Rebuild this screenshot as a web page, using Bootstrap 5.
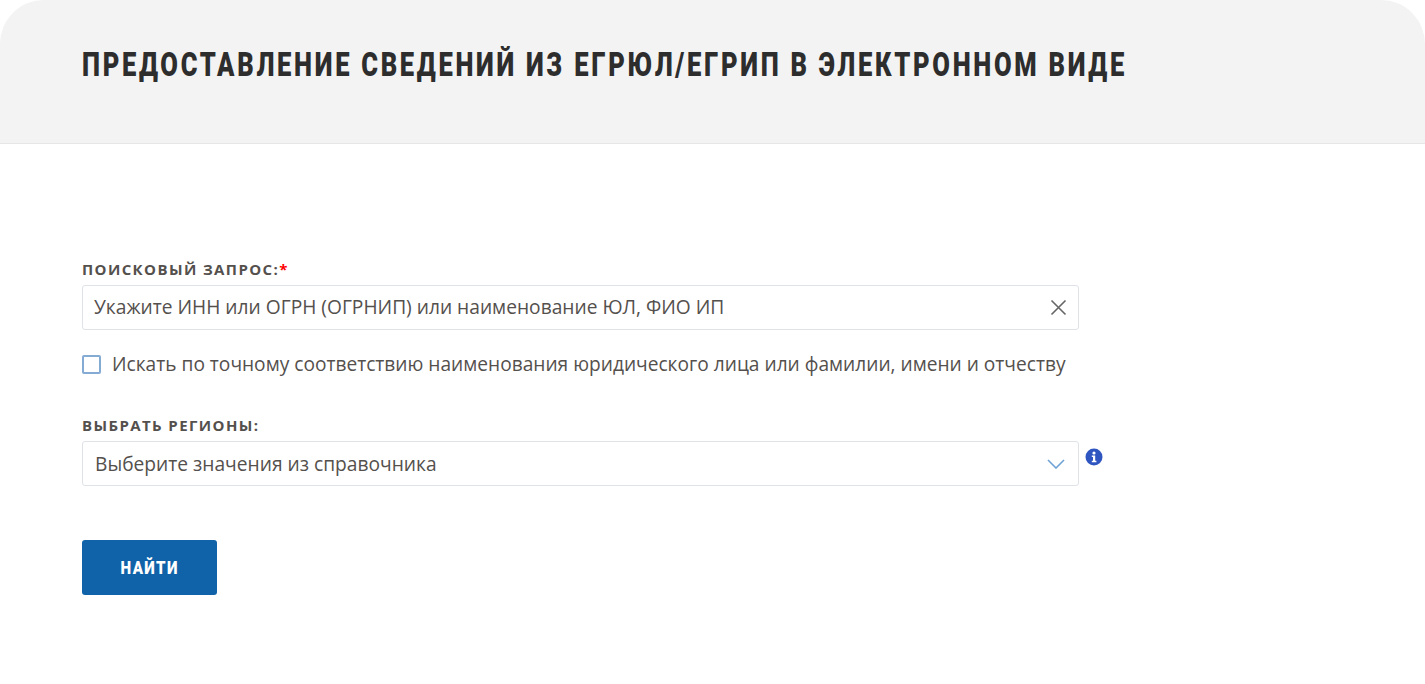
<!DOCTYPE html>
<html lang="ru">
<head>
    <meta charset="UTF-8">
    <meta name="viewport" content="width=device-width, initial-scale=1.0">
    <title>ЕГРЮЛ</title>
    <link rel="stylesheet" href="https://cdn.jsdelivr.net/npm/bootstrap@5.3.2/dist/css/bootstrap.min.css">
    <style>
        html, body { height: 100%; }
        body { background: #fff; font-family: "Open Sans", sans-serif; color: #54504d; overflow: hidden; }
        .shapka { height: 144px; background: #f3f3f3; border-bottom: 1px solid #e6e6e6; border-radius: 44px 44px 0 0; padding: 44px 82px 0; }
        .shapka h1 { font-family: "Roboto", sans-serif; font-weight: 900; font-size: 34px; line-height: 40px; letter-spacing: 3.6px; color: #2d2d2d; margin: 0; white-space: nowrap; transform: scaleX(.751); transform-origin: left center; }
        .forma { padding: 115px 0 0 82px; }
        .metka { font-size: 15px; font-weight: 700; letter-spacing: 1.4px; line-height: 20px; color: #54504d; margin-bottom: 6px; }
        .metka span { color: #f00; }
        .pole { width: 997px; height: 45px; border: 1px solid #dfe3e8; border-radius: 3px; font-size: 19.2px; color: #54504d; background: #fff; }
        .pole-poisk { padding: 0 11px; }
        .pole-region { padding: 1px 13px 0 12px; }
        .galka-ryad { margin-top: 22px; height: 24px; gap: 11px; font-size: 19.15px; line-height: 24px; }
        .galka { width: 19px; height: 19px; border: 2px solid #84abd4; border-radius: 2px; background: #fff; }
        .blok-region { margin-top: 39px; }
        .info { margin: 7px 0 0 6px; }
        .knopka { width: 135px; height: 55px; margin-top: 54px; background: #1063a8; border: 0; border-radius: 3px; color: #fff; padding: 0; }
        .knopka span { display: inline-block; font-family: "Roboto", sans-serif; font-weight: 900; font-size: 18px; letter-spacing: 1.6px; transform: scaleX(.84); }
    </style>
</head>
<body>
    <header class="shapka">
        <h1>ПРЕДОСТАВЛЕНИЕ СВЕДЕНИЙ ИЗ ЕГРЮЛ/ЕГРИП В ЭЛЕКТРОННОМ ВИДЕ</h1>
    </header>

    <main class="forma">
        <div class="metka">ПОИСКОВЫЙ ЗАПРОС:<span>*</span></div>
        <div class="pole pole-poisk d-flex align-items-center justify-content-between">
            <span>Укажите ИНН или ОГРН (ОГРНИП) или наименование ЮЛ, ФИО ИП</span>
            <svg width="17" height="17" viewBox="0 0 17 17"><path d="M1.5 1.5l14 14M15.5 1.5l-14 14" stroke="#666" stroke-width="1.6" fill="none"/></svg>
        </div>

        <div class="galka-ryad d-flex align-items-center">
            <span class="galka d-block"></span>
            <span>Искать по точному соответствию наименования юридического лица или фамилии, имени и отчеству</span>
        </div>

        <div class="blok-region">
            <div class="metka">ВЫБРАТЬ РЕГИОНЫ:</div>
            <div class="d-flex align-items-start">
                <div class="pole pole-region d-flex align-items-center justify-content-between">
                    <span>Выберите значения из справочника</span>
                    <svg width="18" height="10" viewBox="0 0 18 10"><path d="M1 1l8 8 8-8" stroke="#6fa3d6" stroke-width="1.6" fill="none"/></svg>
                </div>
                <svg class="info" width="18" height="18" viewBox="0 0 18 18"><circle cx="9" cy="9" r="8.5" fill="#2f55c0"/><circle cx="9" cy="5" r="1.6" fill="#fff"/><path d="M6.8 7.6h3.4v5.2h1.2v1.4H6.8v-1.4H8V9H6.8z" fill="#fff"/></svg>
            </div>
        </div>

        <button type="button" class="btn knopka d-block"><span>НАЙТИ</span></button>
    </main>

    <script src="https://cdn.jsdelivr.net/npm/bootstrap@5.3.2/dist/js/bootstrap.bundle.min.js"></script>
</body>
</html>
